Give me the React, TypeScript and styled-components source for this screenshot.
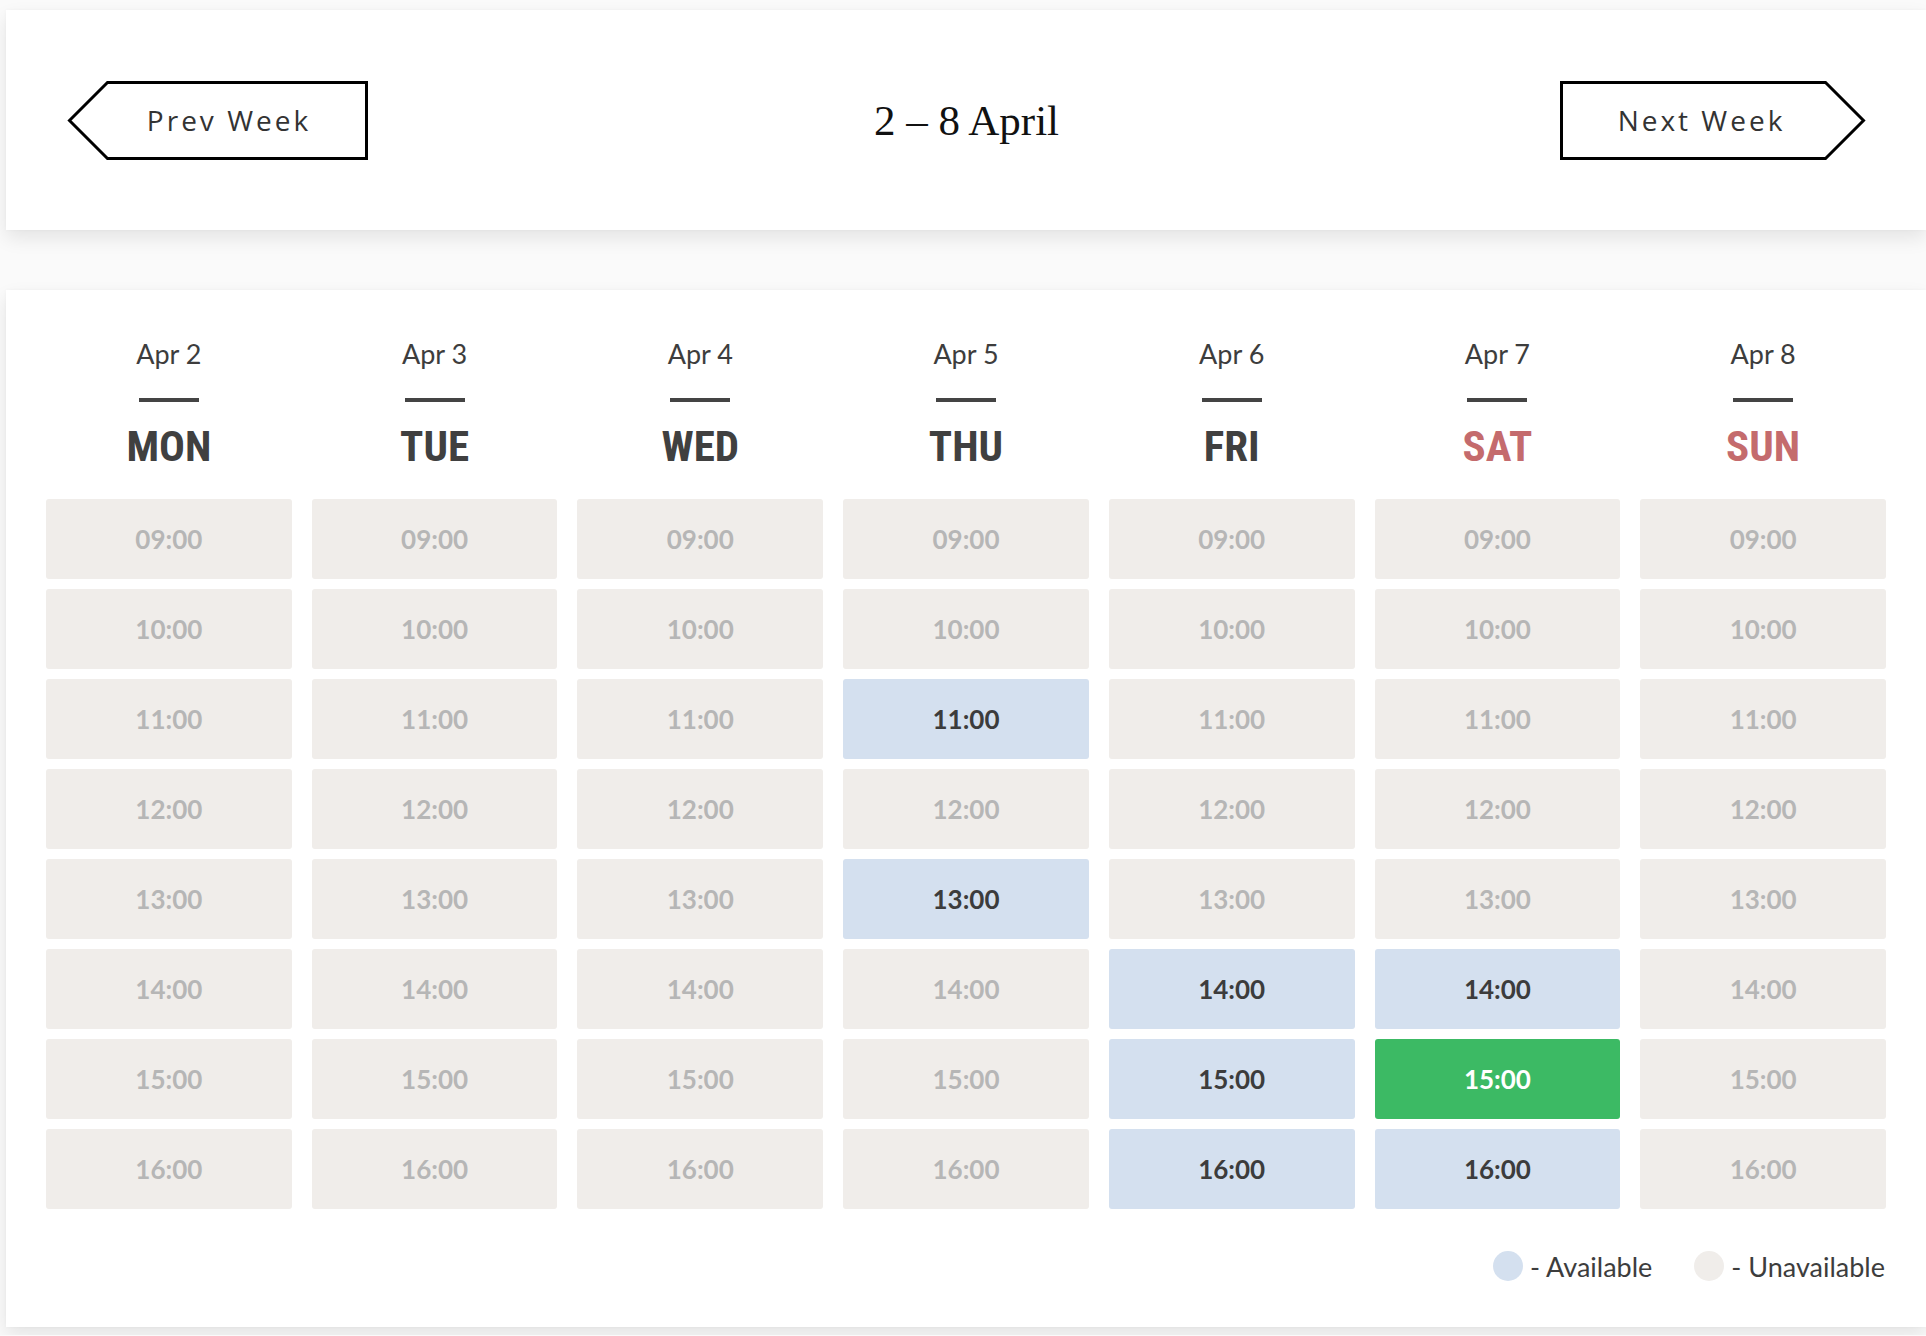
import React from "react";
import styled, { createGlobalStyle } from "styled-components";

const GlobalStyle = createGlobalStyle`
  html, body {
    margin: 0;
    padding: 0;
    background: #fafafa;
  }
  body {
    overflow: hidden;
  }
  * { box-sizing: border-box; }
`;

const Page = styled.div`
  padding: 10px 0 8px 6px;
  display: flex;
  flex-direction: column;
  gap: 60px;
  width: 1926px;
`;

const Card = styled.section`
  width: 1920px;
  background: #ffffff;
  box-shadow: 0 8px 18px rgba(0, 0, 0, 0.09), 0 0 4px rgba(0, 0, 0, 0.03);
`;

const WeekBar = styled(Card)`
  height: 220px;
  padding: 0 61px 0 62px;
  display: grid;
  grid-template-columns: 1fr auto 1fr;
  align-items: center;
`;

const NavButton = styled.button<{ $dir: "prev" | "next"; $width: number }>`
  position: relative;
  justify-self: ${(p) => (p.$dir === "prev" ? "start" : "end")};
  width: ${(p) => p.$width}px;
  height: 79px;
  border: none;
  background: transparent;
  padding: ${(p) => (p.$dir === "prev" ? "0 0 0 22px" : "0 22px 0 0")};
  margin: 0;
  font-family: "Open Sans", "Noto Sans", sans-serif;
  font-size: 28px;
  letter-spacing: 3px;
  color: #333;
  cursor: pointer;
  display: flex;
  align-items: center;
  justify-content: center;
`;

const ButtonOutline = styled.svg`
  position: absolute;
  inset: 0;
  width: 100%;
  height: 100%;
  overflow: visible;
`;

const ButtonLabel = styled.span`
  position: relative;
  line-height: 1;
`;

const RangeTitle = styled.h1`
  margin: 0;
  font-family: "Liberation Serif", "DejaVu Serif", serif;
  font-weight: 400;
  font-size: 43px;
  color: #111;
  line-height: 1;
  white-space: pre;
`;

const Schedule = styled(Card)`
  padding: 50px 40px 46px 40px;
  display: flex;
  flex-direction: column;
`;

const Days = styled.div`
  display: grid;
  grid-template-columns: repeat(7, 1fr);
  column-gap: 20px;
`;

const DayColumn = styled.div`
  display: flex;
  flex-direction: column;
  align-items: stretch;
`;

const DayHead = styled.div`
  display: flex;
  flex-direction: column;
  align-items: center;
  margin-bottom: 32px;
`;

const DateLabel = styled.div`
  font-family: Lato, "Noto Sans", sans-serif;
  font-size: 27px;
  line-height: 1;
  height: 27px;
  color: #3d3d3d;
`;

const Rule = styled.div`
  width: 60px;
  height: 4px;
  background: #444;
  margin-top: 31px;
`;

const DayName = styled.div<{ $weekend: boolean }>`
  margin-top: 23px;
  font-family: "Liberation Sans Narrow", "Roboto Condensed", "DejaVu Sans Condensed", "Liberation Sans", sans-serif;
  font-weight: 700;
  font-size: 43px;
  line-height: 1;
  height: 42px;
  color: ${(p) => (p.$weekend ? "#c46b6d" : "#404040")};
`;

const Slots = styled.div`
  display: flex;
  flex-direction: column;
  gap: 10px;
`;

type SlotState = "off" | "open" | "picked";

const Slot = styled.div<{ $state: SlotState }>`
  height: 80px;
  border-radius: 3px;
  display: flex;
  align-items: center;
  justify-content: center;
  font-family: Lato, "Noto Sans", sans-serif;
  font-weight: 700;
  font-size: 26px;
  background: ${(p) =>
    p.$state === "picked" ? "#3cba64" : p.$state === "open" ? "#d4e0ef" : "#f0edea"};
  color: ${(p) =>
    p.$state === "picked" ? "#ffffff" : p.$state === "open" ? "#3c3c3c" : "#b6b6b6"};
`;

const Legend = styled.div`
  margin-top: 42px;
  display: flex;
  justify-content: flex-end;
  gap: 42px;
  padding-right: 1px;
`;

const LegendItem = styled.div`
  display: flex;
  align-items: center;
  gap: 7px;
  height: 30px;
  font-family: Lato, "Noto Sans", sans-serif;
  font-size: 27px;
  line-height: 1;
  color: #3d3d3d;
`;

const Dot = styled.span<{ $color: string }>`
  width: 30px;
  height: 30px;
  border-radius: 50%;
  background: ${(p) => p.$color};
`;

const days = [
  { date: "Apr 2", name: "MON" },
  { date: "Apr 3", name: "TUE" },
  { date: "Apr 4", name: "WED" },
  { date: "Apr 5", name: "THU" },
  { date: "Apr 6", name: "FRI" },
  { date: "Apr 7", name: "SAT", weekend: true },
  { date: "Apr 8", name: "SUN", weekend: true },
];

const hours = ["09:00", "10:00", "11:00", "12:00", "13:00", "14:00", "15:00", "16:00"];

const available: Record<string, string[]> = {
  THU: ["11:00", "13:00"],
  FRI: ["14:00", "15:00", "16:00"],
  SAT: ["14:00", "16:00"],
};

const picked = { day: "SAT", hour: "15:00" };

function stateOf(day: string, hour: string): SlotState {
  if (picked.day === day && picked.hour === hour) return "picked";
  if ((available[day] || []).includes(hour)) return "open";
  return "off";
}

export default function App() {
  return (
    <>
      <GlobalStyle />
      <Page>
        <WeekBar>
          <NavButton $dir="prev" $width={300}>
            <ButtonOutline viewBox="0 0 300 79" preserveAspectRatio="none">
              <polygon
                points="39.5,1.5 298.5,1.5 298.5,77.5 39.5,77.5 1.5,39.5"
                fill="none"
                stroke="#000"
                strokeWidth="3"
              />
            </ButtonOutline>
            <ButtonLabel>Prev Week</ButtonLabel>
          </NavButton>
          <RangeTitle>2 – 8 April</RangeTitle>
          <NavButton $dir="next" $width={305}>
            <ButtonOutline viewBox="0 0 305 79" preserveAspectRatio="none">
              <polygon
                points="1.5,1.5 265.5,1.5 303.5,39.5 265.5,77.5 1.5,77.5"
                fill="none"
                stroke="#000"
                strokeWidth="3"
              />
            </ButtonOutline>
            <ButtonLabel>Next Week</ButtonLabel>
          </NavButton>
        </WeekBar>

        <Schedule>
          <Days>
            {days.map((d) => (
              <DayColumn key={d.name}>
                <DayHead>
                  <DateLabel>{d.date}</DateLabel>
                  <Rule />
                  <DayName $weekend={!!d.weekend}>{d.name}</DayName>
                </DayHead>
                <Slots>
                  {hours.map((h) => (
                    <Slot key={h} $state={stateOf(d.name, h)}>
                      {h}
                    </Slot>
                  ))}
                </Slots>
              </DayColumn>
            ))}
          </Days>
          <Legend>
            <LegendItem>
              <Dot $color="#d4e0ef" />- Available
            </LegendItem>
            <LegendItem>
              <Dot $color="#f0edea" />- Unavailable
            </LegendItem>
          </Legend>
        </Schedule>
      </Page>
    </>
  );
}
